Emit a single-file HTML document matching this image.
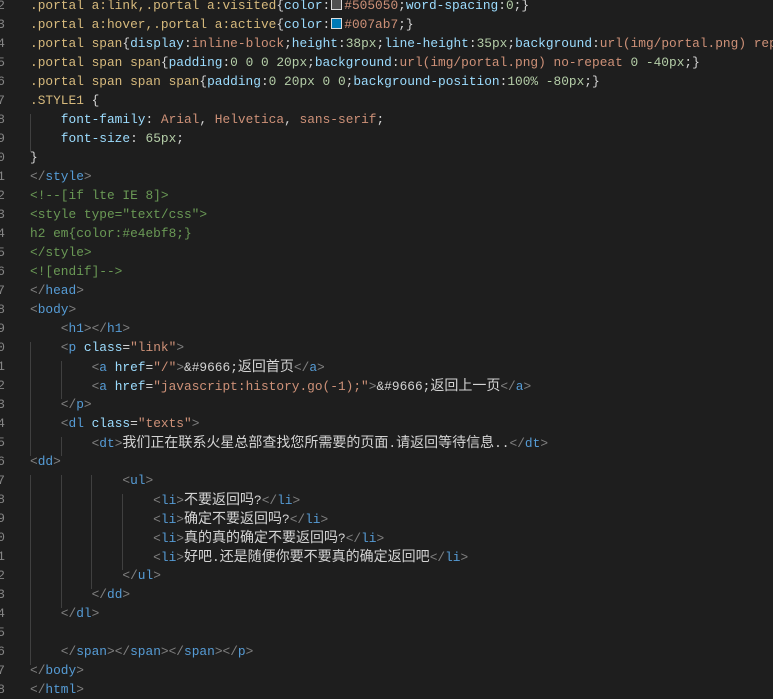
<!DOCTYPE html>
<html><head><meta charset="utf-8"><style>
html,body{margin:0;padding:0;background:#1e1e1e;width:773px;height:691px;overflow:hidden;}
#w{position:absolute;left:0;top:-4.5px;width:773px;}
.l{position:relative;height:19px;line-height:19px;white-space:pre;font-family:"Liberation Mono","Noto Sans CJK SC",monospace;font-size:12.83px;color:#d4d4d4;}
.ln{position:absolute;left:-25px;width:30px;text-align:right;color:#858585;}
.tx{position:absolute;left:30px;}
.g{position:absolute;width:1px;background:#404040;}
.b{color:#808080}.t{color:#569cd6}.a{color:#9cdcfe}.s{color:#ce9178}.c{color:#6a9955}
.sel{color:#d7ba7d}.n{color:#b5cea8}
.j{font-family:"Noto Sans CJK SC",sans-serif;font-size:14px;}
.sw{display:inline-block;width:9px;height:9px;border:1px solid #ddd;margin:0 2px 0 1px;vertical-align:-1px;}
</style></head><body><div id="w">
<div class="g" style="left:30px;top:118px;height:38px"></div>
<div class="g" style="left:30px;top:346px;height:114px"></div>
<div class="g" style="left:30px;top:479px;height:190px"></div>
<div class="g" style="left:61px;top:365px;height:38px"></div>
<div class="g" style="left:61px;top:441px;height:19px"></div>
<div class="g" style="left:61px;top:479px;height:133px"></div>
<div class="g" style="left:91px;top:479px;height:114px"></div>
<div class="g" style="left:122px;top:498px;height:76px"></div>
<div class="l"><span class="ln">2</span><span class="tx"><span class="sel">.portal a:link,.portal a:visited</span>{<span class="a">color</span>:<span class="sw" style="background:#505050"></span><span class="s">#505050</span>;<span class="a">word-spacing</span>:<span class="n">0</span>;}</span></div>
<div class="l"><span class="ln">3</span><span class="tx"><span class="sel">.portal a:hover,.portal a:active</span>{<span class="a">color</span>:<span class="sw" style="background:#007ab7"></span><span class="s">#007ab7</span>;}</span></div>
<div class="l"><span class="ln">4</span><span class="tx"><span class="sel">.portal span</span>{<span class="a">display</span>:<span class="s">inline-block</span>;<span class="a">height</span>:<span class="n">38px</span>;<span class="a">line-height</span>:<span class="n">35px</span>;<span class="a">background</span>:<span class="s">url(img/portal.png) repeat</span></span></div>
<div class="l"><span class="ln">5</span><span class="tx"><span class="sel">.portal span span</span>{<span class="a">padding</span>:<span class="n">0 0 0 20px</span>;<span class="a">background</span>:<span class="s">url(img/portal.png)</span> <span class="s">no-repeat</span> <span class="n">0 -40px</span>;}</span></div>
<div class="l"><span class="ln">6</span><span class="tx"><span class="sel">.portal span span span</span>{<span class="a">padding</span>:<span class="n">0 20px 0 0</span>;<span class="a">background-position</span>:<span class="n">100% -80px</span>;}</span></div>
<div class="l"><span class="ln">7</span><span class="tx"><span class="sel">.STYLE1</span> {</span></div>
<div class="l"><span class="ln">8</span><span class="tx">    <span class="a">font-family</span>: <span class="s">Arial</span>, <span class="s">Helvetica</span>, <span class="s">sans-serif</span>;</span></div>
<div class="l"><span class="ln">9</span><span class="tx">    <span class="a">font-size</span>: <span class="n">65px</span>;</span></div>
<div class="l"><span class="ln">0</span><span class="tx">}</span></div>
<div class="l"><span class="ln">1</span><span class="tx"><span class="b">&lt;/</span><span class="t">style</span><span class="b">&gt;</span></span></div>
<div class="l"><span class="ln">2</span><span class="tx"><span class="c">&lt;!--[if lte IE 8]&gt;</span></span></div>
<div class="l"><span class="ln">3</span><span class="tx"><span class="c">&lt;style type="text/css"&gt;</span></span></div>
<div class="l"><span class="ln">4</span><span class="tx"><span class="c">h2 em{color:#e4ebf8;}</span></span></div>
<div class="l"><span class="ln">5</span><span class="tx"><span class="c">&lt;/style&gt;</span></span></div>
<div class="l"><span class="ln">6</span><span class="tx"><span class="c">&lt;![endif]--&gt;</span></span></div>
<div class="l"><span class="ln">7</span><span class="tx"><span class="b">&lt;/</span><span class="t">head</span><span class="b">&gt;</span></span></div>
<div class="l"><span class="ln">8</span><span class="tx"><span class="b">&lt;</span><span class="t">body</span><span class="b">&gt;</span></span></div>
<div class="l"><span class="ln">9</span><span class="tx">    <span class="b">&lt;</span><span class="t">h1</span><span class="b">&gt;&lt;/</span><span class="t">h1</span><span class="b">&gt;</span></span></div>
<div class="l"><span class="ln">0</span><span class="tx">    <span class="b">&lt;</span><span class="t">p</span> <span class="a">class</span>=<span class="s">"link"</span><span class="b">&gt;</span></span></div>
<div class="l"><span class="ln">1</span><span class="tx">        <span class="b">&lt;</span><span class="t">a</span> <span class="a">href</span>=<span class="s">"/"</span><span class="b">&gt;</span>&amp;#9666;<span class="j">返回首页</span><span class="b">&lt;/</span><span class="t">a</span><span class="b">&gt;</span></span></div>
<div class="l"><span class="ln">2</span><span class="tx">        <span class="b">&lt;</span><span class="t">a</span> <span class="a">href</span>=<span class="s">"javascript:history.go(-1);"</span><span class="b">&gt;</span>&amp;#9666;<span class="j">返回上一页</span><span class="b">&lt;/</span><span class="t">a</span><span class="b">&gt;</span></span></div>
<div class="l"><span class="ln">3</span><span class="tx">    <span class="b">&lt;/</span><span class="t">p</span><span class="b">&gt;</span></span></div>
<div class="l"><span class="ln">4</span><span class="tx">    <span class="b">&lt;</span><span class="t">dl</span> <span class="a">class</span>=<span class="s">"texts"</span><span class="b">&gt;</span></span></div>
<div class="l"><span class="ln">5</span><span class="tx">        <span class="b">&lt;</span><span class="t">dt</span><span class="b">&gt;</span><span class="j">我们正在联系火星总部查找您所需要的页面</span>.<span class="j">请返回等待信息</span>..<span class="b">&lt;/</span><span class="t">dt</span><span class="b">&gt;</span></span></div>
<div class="l"><span class="ln">6</span><span class="tx"><span class="b">&lt;</span><span class="t">dd</span><span class="b">&gt;</span></span></div>
<div class="l"><span class="ln">7</span><span class="tx">            <span class="b">&lt;</span><span class="t">ul</span><span class="b">&gt;</span></span></div>
<div class="l"><span class="ln">8</span><span class="tx">                <span class="b">&lt;</span><span class="t">li</span><span class="b">&gt;</span><span class="j">不要返回吗</span>?<span class="b">&lt;/</span><span class="t">li</span><span class="b">&gt;</span></span></div>
<div class="l"><span class="ln">9</span><span class="tx">                <span class="b">&lt;</span><span class="t">li</span><span class="b">&gt;</span><span class="j">确定不要返回吗</span>?<span class="b">&lt;/</span><span class="t">li</span><span class="b">&gt;</span></span></div>
<div class="l"><span class="ln">0</span><span class="tx">                <span class="b">&lt;</span><span class="t">li</span><span class="b">&gt;</span><span class="j">真的真的确定不要返回吗</span>?<span class="b">&lt;/</span><span class="t">li</span><span class="b">&gt;</span></span></div>
<div class="l"><span class="ln">1</span><span class="tx">                <span class="b">&lt;</span><span class="t">li</span><span class="b">&gt;</span><span class="j">好吧</span>.<span class="j">还是随便你要不要真的确定返回吧</span><span class="b">&lt;/</span><span class="t">li</span><span class="b">&gt;</span></span></div>
<div class="l"><span class="ln">2</span><span class="tx">            <span class="b">&lt;/</span><span class="t">ul</span><span class="b">&gt;</span></span></div>
<div class="l"><span class="ln">3</span><span class="tx">        <span class="b">&lt;/</span><span class="t">dd</span><span class="b">&gt;</span></span></div>
<div class="l"><span class="ln">4</span><span class="tx">    <span class="b">&lt;/</span><span class="t">dl</span><span class="b">&gt;</span></span></div>
<div class="l"><span class="ln">5</span><span class="tx"></span></div>
<div class="l"><span class="ln">6</span><span class="tx">    <span class="b">&lt;/</span><span class="t">span</span><span class="b">&gt;&lt;/</span><span class="t">span</span><span class="b">&gt;&lt;/</span><span class="t">span</span><span class="b">&gt;&lt;/</span><span class="t">p</span><span class="b">&gt;</span></span></div>
<div class="l"><span class="ln">7</span><span class="tx"><span class="b">&lt;/</span><span class="t">body</span><span class="b">&gt;</span></span></div>
<div class="l"><span class="ln">8</span><span class="tx"><span class="b">&lt;/</span><span class="t">html</span><span class="b">&gt;</span></span></div>
</div></body></html>
